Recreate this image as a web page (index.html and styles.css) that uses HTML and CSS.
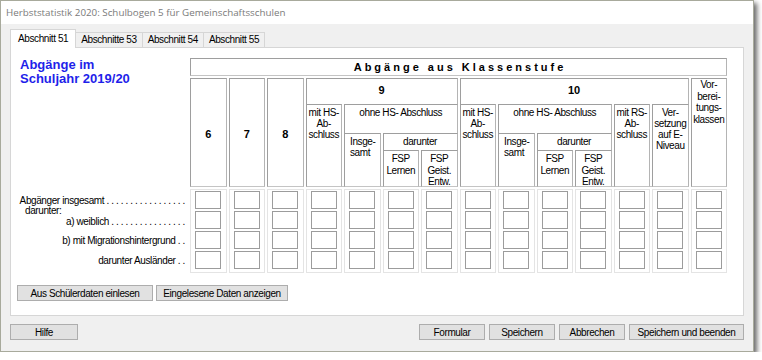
FILE: index.html
```html
<!doctype html>
<html lang="de">

<head>
  <meta charset="utf-8">
  <title>Herbststatistik 2020</title>
  <link rel="stylesheet" href="styles.css">
</head>

<body>
  <div class="window">
    <div class="titlebar">Herbststatistik 2020: Schulbogen 5 für Gemeinschaftsschulen</div>

    <div class="content">
      <div class="tabs">
        <div class="tab active">Abschnitt 51</div>
        <div class="tab">Abschnitte 53</div>
        <div class="tab">Abschnitt 54</div>
        <div class="tab">Abschnitt 55</div>
      </div>

      <div class="panel">
        <div class="form">
          <div class="heading">Abgänge im<br>Schuljahr 2019/20</div>

          <!-- header of the table -->
          <div class="head">
            <div class="box title">Abgänge aus Klassenstufe</div>
            <div class="box num c1">6</div>
            <div class="box num c2">7</div>
            <div class="box num c3">8</div>

            <div class="box group g9">9</div>
            <div class="box sub c4 r3">mit HS-<br>Ab-<br>schluss</div>
            <div class="box sub ohne9">ohne HS- Abschluss</div>
            <div class="box sub insg c5">Insge-<br>samt</div>
            <div class="box sub dar9">darunter</div>
            <div class="box sub fsp c6">FSP<br>Lernen</div>
            <div class="box sub fsp c7">FSP<br>Geist.<br>Entw.</div>

            <div class="box group g10">10</div>
            <div class="box sub c8 r3">mit HS-<br>Ab-<br>schluss</div>
            <div class="box sub ohne10">ohne HS- Abschluss</div>
            <div class="box sub insg c9">Insge-<br>samt</div>
            <div class="box sub dar10">darunter</div>
            <div class="box sub fsp c10">FSP<br>Lernen</div>
            <div class="box sub fsp c11">FSP<br>Geist.<br>Entw.</div>
            <div class="box sub c12 r3">mit RS-<br>Ab-<br>schluss</div>
            <div class="box sub c13 r3">Ver-<br>setzung<br>auf E-<br>Niveau</div>

            <div class="box vorb">Vor-<br>berei-<br>tungs-<br>klassen</div>
          </div>

          <div class="labels">
            <div class="lrow">Abgänger insgesamt . . . . . . . . . . . . . . . . .</div>
            <div class="lrow split">
              <span class="under">darunter:</span>
              <span>a) weiblich . . . . . . . . . . . . . . . .</span>
            </div>
            <div class="lrow">b) mit Migrationshintergrund . .</div>
            <div class="lrow">darunter Ausländer . .</div>
          </div>

          <div class="data">
            <div class="col"><input><input><input><input></div>
            <div class="col"><input><input><input><input></div>
            <div class="col"><input><input><input><input></div>
            <div class="col"><input><input><input><input></div>
            <div class="col"><input><input><input><input></div>
            <div class="col"><input><input><input><input></div>
            <div class="col"><input><input><input><input></div>
            <div class="col"><input><input><input><input></div>
            <div class="col"><input><input><input><input></div>
            <div class="col"><input><input><input><input></div>
            <div class="col"><input><input><input><input></div>
            <div class="col"><input><input><input><input></div>
            <div class="col"><input><input><input><input></div>
            <div class="col"><input><input><input><input></div>
          </div>
        </div>

        <div class="actions">
          <button class="btn read">Aus Schülerdaten einlesen</button>
          <button class="btn show">Eingelesene Daten anzeigen</button>
        </div>
      </div>

      <div class="footer">
        <button class="btn help">Hilfe</button>
        <div class="right">
          <button class="btn std">Formular</button>
          <button class="btn std">Speichern</button>
          <button class="btn std">Abbrechen</button>
          <button class="btn end">Speichern und beenden</button>
        </div>
      </div>
    </div>
  </div>
</body>

</html>
```

FILE: styles.css
```css
* {
  box-sizing: border-box;
}

body {
  margin: 0;
  background: #fff;
  font-family: "Liberation Sans", Arial, sans-serif;
  font-size: 10px;
  letter-spacing: -0.4px;
  color: #000;
}

.window {
  width: 754px;
  height: 352px;
  border: 1px solid #a8aa9c;
  background: #f0f0f0;
  box-shadow: 3px 3px 5px rgba(0, 0, 0, 0.6);
  display: flex;
  flex-direction: column;
}

.titlebar {
  height: 23px;
  background: #fff;
  padding-left: 5px;
  display: flex;
  align-items: center;
  font-family: "Open Sans", sans-serif;
  font-size: 9.8px;
  letter-spacing: 0;
  color: #7a7a7a;
}

.content {
  flex: 1;
  padding: 5px 9px 0 9px;
  display: flex;
  flex-direction: column;
}

/* tabs */
.tabs {
  display: flex;
  align-items: flex-end;
  height: 19px;
  margin-bottom: -1px;
  position: relative;
  z-index: 1;
}

.tab {
  height: 15px;
  margin-bottom: 1px;
  margin-left: -1px;
  padding: 0 5px;
  border: 1px solid #d6d6d6;
  border-bottom: 0;
  background: #f0f0f0;
  line-height: 14px;
}

.tab.active {
  height: 19px;
  margin: 0;
  padding: 0 7px;
  background: #fff;
  line-height: 17px;
}

.panel {
  height: 269px;
  background: #fff;
  border: 1px solid #d6d6d6;
  padding: 10px 0 0 4px;
}

.form {
  display: grid;
  grid-template-columns: 175px 537px;
  row-gap: 2px;
}

.heading {
  margin-left: 5px;
  color: #1f1fea;
  font-size: 13px;
  font-weight: bold;
  line-height: 14px;
  letter-spacing: 0;
}

/* table header */
.head {
  display: grid;
  grid-template-columns: repeat(14, 1fr);
  grid-template-rows: 18px 24px 27px 15px 37px;
  gap: 2px;
}

.box {
  border: 1px solid #9e9e9e;
  border-right-color: #b4b4b4;
  border-bottom-color: #c4c4c4;
  background: #fff;
  text-align: center;
  line-height: 11px;
}

.title {
  grid-column: 1 / -1;
  grid-row: 1;
  font-size: 11px;
  font-weight: bold;
  letter-spacing: 3px;
  padding-left: 3px;
  line-height: 16px;
}

.num {
  grid-row: 2 / 6;
  display: flex;
  align-items: center;
  justify-content: center;
  font-size: 11px;
  font-weight: bold;
  letter-spacing: 0;
  padding-top: 4px;
}

.group {
  grid-row: 2 / 6;
  font-size: 11px;
  font-weight: bold;
  letter-spacing: 0;
  line-height: 22px;
}

.g9 { grid-column: 4 / 8; }
.g10 { grid-column: 8 / 14; }

.sub {
  padding-top: 2px;
}

.r3 { grid-row: 3 / 6; }

.c1 { grid-column: 1; }
.c2 { grid-column: 2; }
.c3 { grid-column: 3; }
.c4 { grid-column: 4; }
.c5 { grid-column: 5; }
.c6 { grid-column: 6; }
.c7 { grid-column: 7; }
.c8 { grid-column: 8; }
.c9 { grid-column: 9; }
.c10 { grid-column: 10; }
.c11 { grid-column: 11; }
.c12 { grid-column: 12; }
.c13 { grid-column: 13; }

.ohne9 { grid-column: 5 / 8; grid-row: 3 / 6; }
.ohne10 { grid-column: 9 / 12; grid-row: 3 / 6; }

.insg {
  grid-row: 4 / 6;
  text-align: left;
  padding-left: 5px;
}

.dar9 { grid-column: 6 / 8; grid-row: 4 / 6; }
.dar10 { grid-column: 10 / 12; grid-row: 4 / 6; }

.fsp {
  grid-row: 5;
  line-height: 11.5px;
}

.vorb {
  grid-column: 14;
  grid-row: 2 / 6;
  padding-top: 0;
  line-height: 11.5px;
}

/* row labels */
.labels {
  display: grid;
  grid-template-rows: repeat(4, 20px);
  padding-top: 1px;
  padding-right: 5px;
  text-align: right;
  white-space: nowrap;
}

.lrow {
  display: flex;
  align-items: center;
  justify-content: flex-end;
}

.lrow.split {
  flex-direction: column;
  align-items: stretch;
  justify-content: flex-start;
  margin-top: -5px;
  line-height: 11px;
}

.under {
  text-align: left;
  padding-left: 10px;
}

/* input cells */
.data {
  display: grid;
  grid-template-columns: repeat(14, 1fr);
  column-gap: 2px;
}

.col {
  border: 1px solid #e4e4e4;
  padding: 1px 0 3px;
  display: flex;
  flex-direction: column;
  align-items: center;
  gap: 2px;
}

.col input {
  width: 26px;
  height: 18px;
  margin: 0;
  padding: 0;
  border: 1px solid #9c9c9c;
  background: #fff;
}

/* buttons */
.btn {
  height: 16px;
  margin: 0;
  padding: 0;
  border: 1px solid #adadad;
  background: #e1e1e1;
  font-family: inherit;
  font-size: 10px;
  letter-spacing: -0.4px;
  color: #000;
}

.actions {
  display: flex;
  gap: 3px;
  margin-top: 12px;
  padding-left: 2px;
}

.read { width: 136px; }
.show { width: 132px; }

.footer {
  display: flex;
  margin-top: 8px;
}

.help { width: 68px; }

.right {
  display: flex;
  gap: 4px;
  margin-left: auto;
}

.std { width: 66px; }
.end { width: 115px; }
```
